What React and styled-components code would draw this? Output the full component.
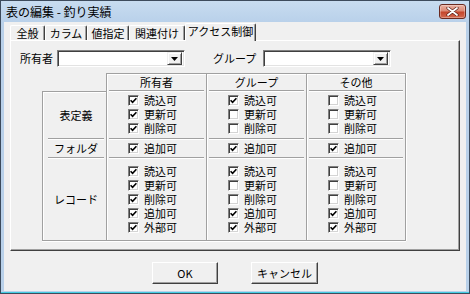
import React from 'react'
import styled, { createGlobalStyle } from 'styled-components'

const ETCH = '#a0a0a0'

const GlobalStyle = createGlobalStyle`
  html, body { margin: 0; padding: 0; background: #fff; }
  body {
    font-family: "Noto Sans CJK JP", "Noto Sans", sans-serif;
    font-size: 11px;
    line-height: 13px;
    color: #000;
  }
  * { box-sizing: border-box; }
`

const columns = ['所有者', 'グループ', 'その他']

const sections = [
    { label: '表定義', height: 48, items: ['読込可', '更新可', '削除可'], checks: [[1, 1, 1], [1, 0, 0], [0, 0, 0]] },
    { label: 'フォルダ', height: 19, items: ['追加可'], checks: [[1], [1], [1]] },
    { label: 'レコード', height: 83, items: ['読込可', '更新可', '削除可', '追加可', '外部可'], checks: [[1, 1, 1, 1, 1], [1, 0, 0, 1, 1], [0, 0, 0, 1, 1]] },
]

const tabs = [
    { label: '全般', w: 35 },
    { label: 'カラム', w: 42 },
    { label: '値指定', w: 42 },
    { label: '関連付け', w: 56 },
    { label: 'アクセス制御', w: 71, active: true },
]

const Check = ({ checked, label }) => (
    <CheckItem>
        <Box>
            {checked && (
                <svg width="7" height="7" viewBox="0 0 7 7">
                    <path d="M0.6 3.2 L2.6 5.3 L6.4 1.2" fill="none" stroke="#000" strokeWidth="1.6" />
                </svg>
            )}
        </Box>
        <CheckText>{label}</CheckText>
    </CheckItem>
)

const Combo = ({ width }) => (
    <ComboBox $w={width}>
        <DropButton>
            <svg width="7" height="4" viewBox="0 0 7 4">
                <path d="M0 0 H7 L3.5 4 Z" fill="#000" />
            </svg>
        </DropButton>
    </ComboBox>
)

const App = () => {
    return (
        <>
            <GlobalStyle />
            <Window>
                <TitleBar>
                    <Title>表の編集 - 釣り実績</Title>
                    <CloseButton>
                        <svg width="13" height="9" viewBox="0 0 13 9">
                            <path d="M2 1 L11 8 M11 1 L2 8" stroke="#5a2018" strokeWidth="3.2" strokeLinecap="round" />
                            <path d="M2 1 L11 8 M11 1 L2 8" stroke="#fff" strokeWidth="1.8" strokeLinecap="round" />
                        </svg>
                    </CloseButton>
                </TitleBar>
                <Client>
                    <TabStrip>
                        {tabs.map(t => (
                            <Tab key={t.label} $w={t.w} $active={t.active}>{t.label}</Tab>
                        ))}
                    </TabStrip>
                    <Panel>
                        <OwnerRow>
                            <FieldLabel $w={37}>所有者</FieldLabel>
                            <Combo width={128} />
                            <FieldLabel $w={50} $gap={28}>グループ</FieldLabel>
                            <Combo width={128} />
                        </OwnerRow>
                        <Grid>
                            <div />
                            {columns.map((c, i) => (
                                <Cell key={c} $left $top $right={i === 2}>
                                    <CellInner $center $sep>{c}</CellInner>
                                </Cell>
                            ))}
                            {sections.map((s, si) => {
                                const lastRow = si === sections.length - 1
                                return (
                                    <React.Fragment key={s.label}>
                                        <Cell $label $left $top={si === 0} $bottom={lastRow}>
                                            <CellInner $center $sep={!lastRow}>{s.label}</CellInner>
                                        </Cell>
                                        {s.checks.map((col, ci) => (
                                            <Cell key={ci} $left $right={ci === 2} $bottom={lastRow}>
                                                <CellInner $indent={19} $sep={!lastRow}>
                                                    {s.items.map((item, ii) => (
                                                        <Check key={item} label={item} checked={!!col[ii]} />
                                                    ))}
                                                </CellInner>
                                            </Cell>
                                        ))}
                                    </React.Fragment>
                                )
                            })}
                        </Grid>
                    </Panel>
                    <ButtonRow>
                        <Button $w={66}>OK</Button>
                        <Button $w={67}>キャンセル</Button>
                    </ButtonRow>
                </Client>
            </Window>
        </>
    )
}

export default App

const Window = styled.div`
    width: 470px;
    height: 294px;
    display: flex;
    flex-direction: column;
    border: 1px solid #3d4b5c;
    background: #b9d1ea;
    padding: 0 3px 2px;
    box-shadow: inset 0 -1px 0 #44cde2;
`

const TitleBar = styled.div`
    height: 21px;
    flex: none;
    display: flex;
    align-items: center;
    justify-content: space-between;
    margin: 0 -3px;
    padding: 0 3px 0 5px;
    background: linear-gradient(#c8dcf0, #b9d1ea);
`

const Title = styled.div`
    font-size: 12px;
    line-height: 14px;
    color: #000;
`

const CloseButton = styled.div`
    width: 27px;
    height: 15px;
    border: 1px solid #6a2a20;
    border-radius: 3px;
    background: linear-gradient(#eab0a2 0%, #dc8a76 45%, #c4462c 55%, #d46a50 100%);
    box-shadow: inset 0 0 0 1px rgba(255, 255, 255, 0.3);
    display: flex;
    align-items: center;
    justify-content: center;
`

const Client = styled.div`
    flex: 1;
    background: #f0f0f0;
    display: flex;
    flex-direction: column;
    padding: 0 6px;
`

const TabStrip = styled.div`
    height: 18px;
    flex: none;
    display: flex;
    align-items: flex-end;
    position: relative;
    z-index: 1;
`

const Tab = styled.div`
    width: ${p => p.$w}px;
    height: ${p => p.$active ? 18 : 15}px;
    margin-bottom: ${p => p.$active ? -1 : 0}px;
    display: flex;
    align-items: center;
    justify-content: center;
    padding-bottom: ${p => p.$active ? 2 : 0}px;
    background: #f0f0f0;
    border-top: 1px solid #fff;
    border-left: 1px solid #fff;
    border-right: 1px solid #404040;
    border-radius: 2px 2px 0 0;
    box-shadow: inset -1px 0 0 #a0a0a0;
    white-space: nowrap;
`

const Panel = styled.div`
    height: 211px;
    flex: none;
    border: 1px solid;
    border-color: #fff #404040 #404040 #fff;
    box-shadow: inset -1px -1px 0 #a0a0a0;
    padding: 9px 9px 0;
`

const OwnerRow = styled.div`
    display: flex;
    align-items: center;
    height: 17px;
`

const FieldLabel = styled.div`
    width: ${p => p.$w}px;
    margin-left: ${p => p.$gap || 0}px;
    white-space: nowrap;
`

const ComboBox = styled.div`
    width: ${p => p.$w}px;
    height: 17px;
    background: #fff;
    border: 1px solid;
    border-color: #808080 #fff #fff #808080;
    box-shadow: inset 1px 1px 0 #404040, inset -1px -1px 0 #e3e3e3;
    display: flex;
    justify-content: flex-end;
    align-items: center;
    padding: 1px 2px 1px 1px;
`

const DropButton = styled.div`
    width: 15px;
    height: 13px;
    background: #f0f0f0;
    border: 1px solid;
    border-color: #f0f0f0 #404040 #404040 #f0f0f0;
    box-shadow: inset 1px 1px 0 #fff, inset -1px -1px 0 #a0a0a0;
    display: flex;
    align-items: center;
    justify-content: center;
`

const Grid = styled.div`
    display: grid;
    grid-template-columns: 64px repeat(3, 100px);
    grid-template-rows: 18px ${sections.map(s => `${s.height}px`).join(' ')};
    margin: 6px 0 0 22px;
    width: max-content;
`

const edgeShadow = p => {
    const s = []
    if (p.$left) s.push('inset 1px 0 0 #fff')
    if (p.$top) s.push('inset 0 1px 0 #fff')
    if (p.$right) s.push('1px 0 0 #fff')
    if (p.$bottom) s.push('0 1px 0 #fff')
    return s.length ? s.join(', ') : 'none'
}

const Cell = styled.div`
    display: flex;
    padding: ${p => p.$label ? '0 2px 0 5px' : '0 2px'};
    border-left: ${p => p.$left ? `1px solid ${ETCH}` : 'none'};
    border-right: ${p => p.$right ? `1px solid ${ETCH}` : 'none'};
    border-top: ${p => p.$top ? `1px solid ${ETCH}` : 'none'};
    border-bottom: ${p => p.$bottom ? `1px solid ${ETCH}` : 'none'};
    box-shadow: ${edgeShadow};
`

const CellInner = styled.div`
    flex: 1;
    display: flex;
    flex-direction: column;
    justify-content: center;
    align-items: ${p => p.$center ? 'center' : 'flex-start'};
    padding-left: ${p => p.$indent || 0}px;
    border-bottom: ${p => p.$sep ? `1px solid ${ETCH}` : 'none'};
    box-shadow: ${p => p.$sep ? '0 1px 0 #fff' : 'none'};
    white-space: nowrap;
`

const CheckItem = styled.div`
    display: flex;
    align-items: center;
    gap: 5px;
    height: 14px;
`

const CheckText = styled.span`
    display: block;
    height: 13px;
    line-height: 13px;
    font-size: 11px;
`

const Box = styled.span`
    width: 11px;
    height: 11px;
    flex: none;
    background: #fff;
    border: 1px solid;
    border-color: #808080 #fff #fff #808080;
    box-shadow: inset 1px 1px 0 #404040, inset -1px -1px 0 #d4d4d4;
    display: flex;
    align-items: center;
    justify-content: center;
`

const ButtonRow = styled.div`
    display: flex;
    justify-content: center;
    gap: 33px;
    margin-top: 11px;
`

const Button = styled.button`
    width: ${p => p.$w}px;
    height: 22px;
    padding: 0;
    background: #f0f0f0;
    border: 1px solid;
    border-color: #fff #404040 #404040 #fff;
    box-shadow: inset -1px -1px 0 #a0a0a0;
    font-family: "Noto Sans CJK JP", "Noto Sans", sans-serif;
    font-size: 11px;
    color: #000;
`
